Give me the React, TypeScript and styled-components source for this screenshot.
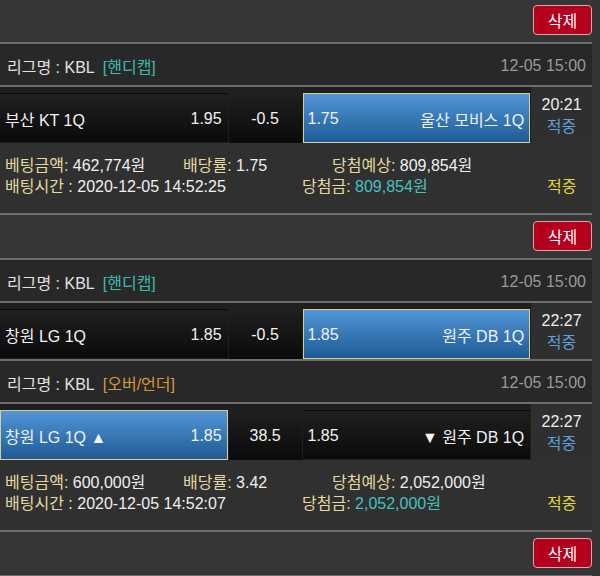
import styled, { createGlobalStyle } from "styled-components";

const GlobalStyle = createGlobalStyle`
    body {
        margin: 0;
        background: #343434;
        font-family: "Liberation Sans", "Noto Sans CJK KR", sans-serif;
        font-size: 16px;
        color: #e8e8e8;
    }
`;

type Side = { team: string; odds: string; picked?: boolean; mark?: string };

type Bet = {
    league: string;
    kind: string;
    kindColor: "teal" | "orange";
    date: string;
    home: Side;
    line: string;
    away: Side;
    time: string;
};

type Slip = {
    bets: Bet[];
    amount: string;
    rate: string;
    expected: string;
    placed: string;
    won: string;
};

const slips: Slip[] = [
    {
        bets: [
            {
                league: "KBL",
                kind: "[핸디캡]",
                kindColor: "teal",
                date: "12-05 15:00",
                home: { team: "부산 KT 1Q", odds: "1.95" },
                line: "-0.5",
                away: { team: "울산 모비스 1Q", odds: "1.75", picked: true },
                time: "20:21",
            },
        ],
        amount: "462,774원",
        rate: "1.75",
        expected: "809,854원",
        placed: "2020-12-05 14:52:25",
        won: "809,854원",
    },
    {
        bets: [
            {
                league: "KBL",
                kind: "[핸디캡]",
                kindColor: "teal",
                date: "12-05 15:00",
                home: { team: "창원 LG 1Q", odds: "1.85" },
                line: "-0.5",
                away: { team: "원주 DB 1Q", odds: "1.85", picked: true },
                time: "22:27",
            },
            {
                league: "KBL",
                kind: "[오버/언더]",
                kindColor: "orange",
                date: "12-05 15:00",
                home: { team: "창원 LG 1Q", odds: "1.85", picked: true, mark: "▲" },
                line: "38.5",
                away: { team: "원주 DB 1Q", odds: "1.85", mark: "▼" },
                time: "22:27",
            },
        ],
        amount: "600,000원",
        rate: "3.42",
        expected: "2,052,000원",
        placed: "2020-12-05 14:52:07",
        won: "2,052,000원",
    },
];

export default function App() {
    return (
        <>
            <GlobalStyle />
            <Page>
                <DeleteBar>
                    <DeleteButton>삭제</DeleteButton>
                </DeleteBar>
                {slips.map((slip, i) => (
                    <div key={i}>
                        {slip.bets.map((bet, j) => (
                            <div key={j}>
                                <LeagueRow>
                                    <span>
                                        리그명 : {bet.league}
                                        <Kind $color={bet.kindColor}>{bet.kind}</Kind>
                                    </span>
                                    <GameDate>{bet.date}</GameDate>
                                </LeagueRow>
                                <BetRow $last={j === slip.bets.length - 1}>
                                    <TeamCell $picked={!!bet.home.picked}>
                                        <span>
                                            {bet.home.team}
                                            {bet.home.mark && ` ${bet.home.mark}`}
                                        </span>
                                        <span>{bet.home.odds}</span>
                                    </TeamCell>
                                    <LineCell>{bet.line}</LineCell>
                                    <TeamCell $picked={!!bet.away.picked}>
                                        <span>{bet.away.odds}</span>
                                        <span>
                                            {bet.away.mark && `${bet.away.mark} `}
                                            {bet.away.team}
                                        </span>
                                    </TeamCell>
                                    <TimeCell>
                                        <span>{bet.time}</span>
                                        <Hit>적중</Hit>
                                    </TimeCell>
                                </BetRow>
                            </div>
                        ))}
                        <Details>
                            <DetailLine $cols="178px 149px 1fr">
                                <span>
                                    <Label>베팅금액:</Label> {slip.amount}
                                </span>
                                <span>
                                    <Label>배당률:</Label> {slip.rate}
                                </span>
                                <span>
                                    <Label>당첨예상:</Label> {slip.expected}
                                </span>
                            </DetailLine>
                            <DetailLine $cols="297px 245px 1fr">
                                <span>
                                    <Label>배팅시간</Label> : {slip.placed}
                                </span>
                                <span>
                                    <Label>당첨금:</Label> <Won>{slip.won}</Won>
                                </span>
                                <Result>적중</Result>
                            </DetailLine>
                        </Details>
                        <DeleteBar>
                            <DeleteButton>삭제</DeleteButton>
                        </DeleteBar>
                    </div>
                ))}
            </Page>
        </>
    );
}

const Page = styled.div`
    width: 592px;
    margin-top: -1px;
`;

const DeleteBar = styled.div`
    display: flex;
    justify-content: flex-end;
    padding: 6px 0 7px;
    border-bottom: 2px solid #6d6d6d;
    background: #363636;
`;

const DeleteButton = styled.button`
    width: 59px;
    height: 30px;
    padding: 0;
    border: 1px solid #d7a9ae;
    border-radius: 4px;
    background: #b4001d;
    color: #fff;
    font-family: inherit;
    font-size: 16px;
`;

const LeagueRow = styled.div`
    display: flex;
    align-items: center;
    justify-content: space-between;
    height: 43px;
    padding: 3px 6px 0 7px;
    box-sizing: border-box;
    border-bottom: 2px solid #6d6d6d;
    background: #282828;
    color: #e2e2e2;
`;

const Kind = styled.span<{ $color: "teal" | "orange" }>`
    margin-left: 8px;
    color: ${(p) => (p.$color === "teal" ? "#3fbab3" : "#d8963a")};
`;

const GameDate = styled.span`
    color: #9b9b9b;
`;

const BetRow = styled.div<{ $last: boolean }>`
    display: flex;
    gap: 1px;
    padding-top: 6px;
    background: #1f1f1f;
    border-bottom: ${(p) => (p.$last ? "none" : "2px solid #6d6d6d")};
`;

const TeamCell = styled.div<{ $picked: boolean }>`
    display: flex;
    align-items: center;
    justify-content: space-between;
    width: 228px;
    height: 50px;
    box-sizing: border-box;
    padding: 2px 5px 0 4px;
    color: #f2f2f2;
    border: 1px solid ${(p) => (p.$picked ? "#d9cd92" : "transparent")};
    background: ${(p) =>
        p.$picked
            ? "linear-gradient(#5296d6, #1d5b95)"
            : "linear-gradient(#202020, #0a0a0a)"};
`;

const LineCell = styled.div`
    display: flex;
    align-items: center;
    justify-content: center;
    width: 73px;
    height: 50px;
    padding-top: 2px;
    box-sizing: border-box;
    color: #f2f2f2;
    background: linear-gradient(#202020, #0a0a0a);
`;

const TimeCell = styled.div`
    display: flex;
    flex-direction: column;
    align-items: center;
    justify-content: center;
    width: 61px;
    height: 56px;
    margin-top: -6px;
    padding-top: 2px;
    box-sizing: border-box;
    line-height: 22px;
    background: #2f2f2f;
    color: #ededed;
`;

const Hit = styled.span`
    color: #5f9fdc;
`;

const Details = styled.div`
    height: 72px;
    box-sizing: border-box;
    padding: 12px 0 0 5px;
    line-height: 21px;
    border-bottom: 2px solid #6d6d6d;
    background: #303030;
    color: #efefef;
`;

const DetailLine = styled.div<{ $cols: string }>`
    display: grid;
    grid-template-columns: ${(p) => p.$cols};
    white-space: nowrap;
`;

const Label = styled.span`
    color: #e6d8a0;
`;

const Won = styled.span`
    color: #45c2c0;
`;

const Result = styled.span`
    color: #e4d33c;
`;
